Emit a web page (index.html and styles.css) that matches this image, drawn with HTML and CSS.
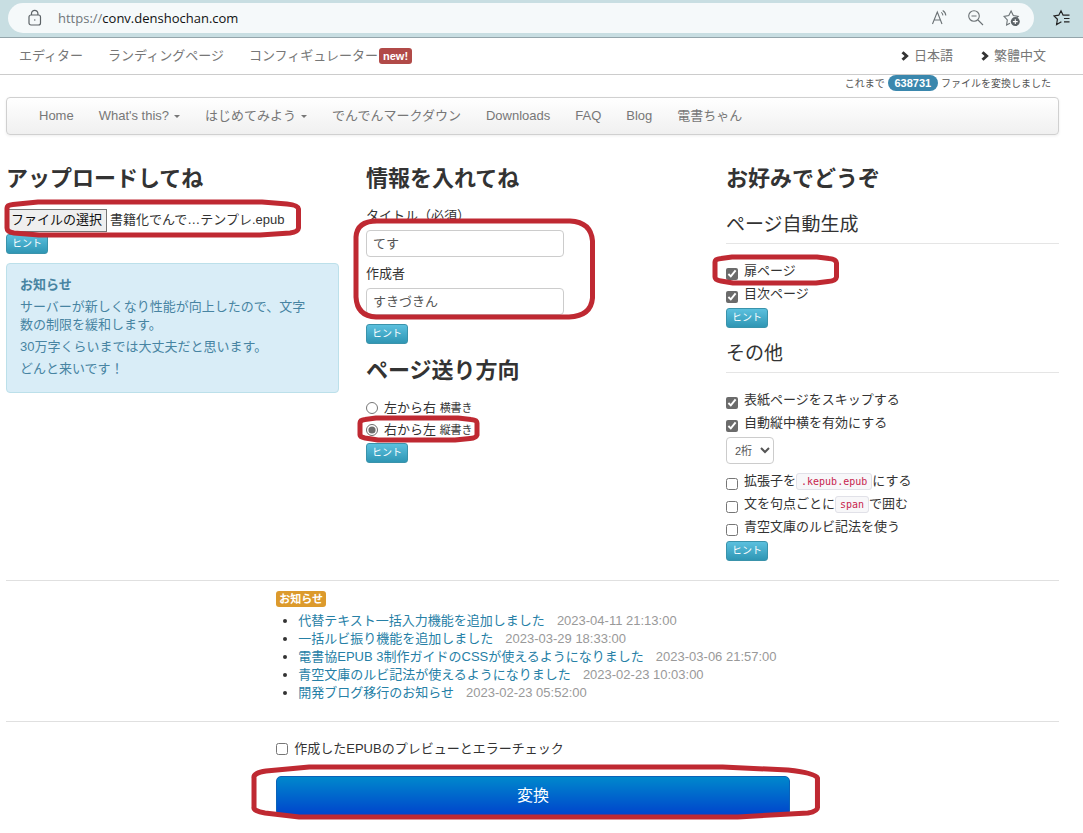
FILE: index.html
```html
<!DOCTYPE html>
<html lang="ja">
<head>
<meta charset="utf-8">
<title>でんでんコンバーター</title>
<link rel="stylesheet" href="styles.css">
</head>
<body>
<div class="browser">
  <div class="address">
    <svg class="lock" width="14" height="18" viewBox="0 0 14 18" fill="none" stroke="#5c6367" stroke-width="1.2"><rect x="1" y="6" width="11.5" height="10" rx="2"/><path d="M3.5 6V4.5a3.2 3.2 0 0 1 6.4 0V6"/><circle cx="6.8" cy="11" r=".7" fill="#5c6367" stroke="none"/></svg>
    <span class="url"><span class="scheme">https://</span>conv.denshochan.com</span>
    <button class="tool" type="button" aria-label="音声で読み上げる"><svg width="18" height="18" viewBox="0 0 18 18" fill="none" stroke="#6b7275" stroke-width="1.1"><path d="M1.5 15 6.3 3 11 15M3.2 11h6.2M10.2 3.4q1.600 1 1.700 3M11.700 1.500q2.900 1.700 3.100 5"/></svg></button>
    <button class="tool" type="button" aria-label="縮小"><svg width="18" height="18" viewBox="0 0 18 18" fill="none" stroke="#6b7275" stroke-width="1.1"><circle cx="7" cy="7" r="5.3"/><path d="M4.5 7h5M11 11l5 5"/></svg></button>
    <button class="tool" type="button" aria-label="お気に入りに追加"><svg width="18" height="18" viewBox="0 0 18 18" fill="none" stroke="#6b7275" stroke-width="1.1"><path d="M7 14.2 3.6 16l.7-5L1 7.4l4.8-.8L8.1 2l2.2 4.6 4.9.8-1.6 1.6"/><circle cx="12.3" cy="12.6" r="4.5" fill="#5c6367" stroke="none"/><path d="M12.3 10.2V15M9.9 12.6h4.8" stroke="#fff"/></svg></button>
  </div>
  <button class="tool favorites" type="button" aria-label="お気に入り"><svg width="18" height="18" viewBox="0 0 18 18" fill="none" stroke="#222" stroke-width="1.2"><path d="M8.4 12.8 3.6 15.5l.8-5.2L1 7l4.8-.8L8 1.8l2.1 4.4h6.4M11 9.5h5.5M11 12.8h5.5"/></svg></button>
</div>

<header class="topbar">
  <nav class="toplinks">
    <a href="#">エディター</a>
    <a href="#">ランディングページ</a>
    <a href="#">コンフィギュレーター<span class="new">new!</span></a>
  </nav>
  <nav class="languages">
    <a href="#"><svg width="9" height="10" viewBox="0 0 9 10"><path d="M.5 2.2 2.5.3 7.8 5 2.5 9.7.5 7.8 3.6 5z" fill="#333"/></svg>日本語</a>
    <a href="#"><svg width="9" height="10" viewBox="0 0 9 10"><path d="M.5 2.2 2.5.3 7.8 5 2.5 9.7.5 7.8 3.6 5z" fill="#333"/></svg>繁體中文</a>
  </nav>
</header>

<div class="page">
  <p class="counter">これまで <span class="count">638731</span> ファイルを変換しました</p>

  <nav class="navbar">
    <a href="#">Home</a>
    <a href="#" class="dropdown">What's this?</a>
    <a href="#" class="dropdown">はじめてみよう</a>
    <a href="#">でんでんマークダウン</a>
    <a href="#">Downloads</a>
    <a href="#">FAQ</a>
    <a href="#">Blog</a>
    <a href="#">電書ちゃん</a>
  </nav>

  <form>
    <div class="columns">
      <section>
        <h2>アップロードしてね</h2>
        <div class="file marked">
          <button class="choose" type="button">ファイルの選択</button>
          <span>書籍化でんで…テンプレ.epub</span>
          <svg class="mark mark-file" width="298" height="40" viewBox="0 0 298 40"><path d="M3 9Q3 6 9 5.500L34 3H258L283 5Q294 6 294.500 10V29Q294 33 286 34L256 36H35L10 34Q3 33 3 29Z"/></svg>
        </div>
        <button class="hint" type="button">ヒント</button>
        <div class="notice">
          <strong>お知らせ</strong>
          <p>サーバーが新しくなり性能が向上したので、文字数の制限を緩和します。</p>
          <p>30万字くらいまでは大丈夫だと思います。</p>
          <p>どんと来いです！</p>
        </div>
      </section>

      <section>
        <h2>情報を入れてね</h2>
        <div class="fields marked">
          <label for="title">タイトル（必須）</label>
          <input id="title" type="text" value="てす">
          <label for="author">作成者</label>
          <input id="author" type="text" value="すきづきん">
          <svg class="mark mark-fields" width="243" height="102" viewBox="0 0 243 102"><path d="M3 19Q4 3 24 3H217Q238 4 239.500 23V80Q238 98 216 99H23Q4 98 3 79Z"/></svg>
        </div>
        <button class="hint" type="button">ヒント</button>
        <h2 class="next">ページ送り方向</h2>
        <label class="radio"><input type="radio" name="direction"><span>左から右 <small>横書き</small></span></label>
        <label class="radio marked"><input type="radio" name="direction" checked><span>右から左 <small>縦書き</small></span>
          <svg class="mark mark-radio" width="123" height="28" viewBox="0 0 123 28"><path d="M3 8Q3 5 8 4.500L19 3H101L114 4.500Q120 5 120 8V20Q119 23 113 23.500L98 25H21L8 23Q3 22 3 20Z"/></svg>
        </label>
        <button class="hint" type="button">ヒント</button>
      </section>

      <section>
        <h2>お好みでどうぞ</h2>
        <h3>ページ自動生成</h3>
        <label class="check marked"><input type="checkbox" checked>扉ページ
          <svg class="mark mark-check" width="128" height="32" viewBox="0 0 128 32"><path d="M3 8Q3 5 9 4.500L20 3H105L117 4.500Q124 5 124.500 9V23Q124 27 116 27.500L104 29H21L9 27Q3 26 3 23Z"/></svg>
        </label>
        <label class="check"><input type="checkbox" checked>目次ページ</label>
        <button class="hint" type="button">ヒント</button>
        <h3 class="next">その他</h3>
        <label class="check"><input type="checkbox" checked>表紙ページをスキップする</label>
        <label class="check"><input type="checkbox" checked>自動縦中横を有効にする</label>
        <select aria-label="縦中横の桁数"><option>2桁</option><option>3桁</option></select>
        <label class="check"><input type="checkbox"><span>拡張子を<code>.kepub.epub</code>にする</span></label>
        <label class="check"><input type="checkbox"><span>文を句点ごとに<code>span</code>で囲む</span></label>
        <label class="check"><input type="checkbox">青空文庫のルビ記法を使う</label>
        <button class="hint" type="button">ヒント</button>
      </section>
    </div>

    <hr>
    <section class="center news">
      <span class="badge">お知らせ</span>
      <ul>
        <li><a href="#">代替テキスト一括入力機能を追加しました</a><time>2023-04-11 21:13:00</time></li>
        <li><a href="#">一括ルビ振り機能を追加しました</a><time>2023-03-29 18:33:00</time></li>
        <li><a href="#">電書協EPUB 3制作ガイドのCSSが使えるようになりました</a><time>2023-03-06 21:57:00</time></li>
        <li><a href="#">青空文庫のルビ記法が使えるようになりました</a><time>2023-02-23 10:03:00</time></li>
        <li><a href="#">開発ブログ移行のお知らせ</a><time>2023-02-23 05:52:00</time></li>
      </ul>
    </section>
    <hr>
    <div class="center submit">
      <label class="preview"><input type="checkbox">作成したEPUBのプレビューとエラーチェック</label>
      <div class="marked">
        <button class="convert" type="submit">変換</button>
        <svg class="mark mark-convert" viewBox="0 0 568 56" preserveAspectRatio="none"><path d="M3 14Q2 9 15 7L58 3H470L535 6Q562 9 564.500 14V43Q565 47 555 49L485 53H48L14 49Q2 47 3 43Z"/></svg>
      </div>
    </div>
  </form>
</div>
</body>
</html>
```
FILE: styles.css
```css
* { box-sizing: border-box; }

body {
  margin: 0;
  background: #fff;
  color: #333;
  font: 13px/18px "Liberation Sans", "Noto Sans CJK JP", sans-serif;
}

a { color: #777; text-decoration: none; }
button, input, select { margin: 0; font: inherit; }
p { margin: 0; }
svg { display: block; }

/* browser chrome */
.browser {
  display: flex;
  align-items: center;
  height: 38px;
  padding: 0 12px 2px 8px;
  background: #c8dee2;
  border-bottom: 1px solid #94a5ab;
}
.address {
  flex: 1;
  display: flex;
  align-items: center;
  gap: 18px;
  height: 30px;
  padding: 0 13px 0 20px;
  border-radius: 15px;
  background: #f5f9fa;
}
.url {
  flex: 1;
  color: #111;
  font: 13px/18px "Open Sans", "Noto Sans", sans-serif;
}
.lock { margin-right: -2px; }
.scheme { color: #70777a; }
.tool { padding: 0; border: 0; background: none; }
.favorites { margin-left: 19px; }

/* site links */
.topbar {
  display: flex;
  justify-content: space-between;
  align-items: center;
  height: 37px;
  padding: 0 37px 0 19px;
  border-bottom: 1px solid #ccc;
}
.toplinks { display: flex; gap: 25px; }
.new {
  display: inline-block;
  margin-left: 1px;
  padding: 0 4px;
  border-radius: 3px;
  background: #b14a48;
  color: #fff;
  font-size: 11px;
  font-weight: bold;
  line-height: 16px;
}
.languages { display: flex; gap: 28px; }
.languages a { display: flex; align-items: center; gap: 4px; }

.page { padding: 0 24px 14px 6px; }
.counter {
  height: 22px;
  padding-right: 8px;
  color: #555;
  font-size: 10px;
  line-height: 16px;
  text-align: right;
}
.count {
  display: inline-block;
  padding: 0 7px;
  border-radius: 8px;
  background: #3a87ad;
  color: #fff;
  font-size: 11px;
  font-weight: bold;
}

.navbar {
  display: flex;
  align-items: center;
  gap: 25px;
  height: 38px;
  padding: 0 32px;
  margin-bottom: 26px;
  border: 1px solid #d0d0d0;
  border-radius: 4px;
  background: linear-gradient(#fff, #f0f0f0);
  box-shadow: 0 1px 3px rgba(0, 0, 0, .07);
}
.dropdown::after {
  content: "";
  display: inline-block;
  margin-left: 5px;
  border: 3px solid transparent;
  border-top-color: #777;
  border-bottom: 0;
  vertical-align: middle;
}

/* three form columns */
.columns {
  display: grid;
  grid-template-columns: repeat(3, 1fr);
  gap: 27px;
}
h2 { margin: 0 0 10px; font-size: 22px; line-height: 36px; }
h3 {
  margin: 0 0 18px;
  border-bottom: 1px solid #e5e5e5;
  font-size: 19px;
  font-weight: normal;
  line-height: 36px;
}
h3.next { margin-top: 8px; }
h2.next { margin-top: 9px; }

.marked { position: relative; }
.mark {
  position: absolute;
  z-index: 1;
  fill: none;
  stroke: #bf2932;
  stroke-width: 5;
  stroke-linejoin: round;
  pointer-events: none;
}
.mark-file { left: -2px; top: -8px; }
.mark-fields { left: -13px; top: 11px; }
.mark-radio { left: -9px; top: -6px; }
.mark-check { left: -14px; top: -8px; }
.mark-convert { left: -5%; top: -12px; width: 111%; height: 56px; }

.file { display: flex; align-items: center; gap: 3px; height: 26px; margin-bottom: 1px; white-space: nowrap; }
.choose {
  height: 23px;
  padding: 0 4px;
  border: 1px solid #767676;
  background: #efefef;
  color: #111;
  line-height: 18px;
}
.hint {
  display: block;
  height: 20px;
  padding: 0 5px;
  border: 1px solid #3a93ab;
  border-radius: 3px;
  background: linear-gradient(#5bc0de, #2f96b4);
  color: #fff;
  font-size: 10px;
  line-height: 18px;
}

.notice {
  margin-top: 9px;
  padding: 12px 31px 10px 13px;
  border: 1px solid #bce0ea;
  border-radius: 4px;
  background: #d9edf7;
  color: #4784a2;
}
.notice strong { display: block; margin-bottom: 4px; }
.notice p { margin-bottom: 4px; }

.fields { padding-bottom: 9px; }
.fields label { display: block; margin-bottom: 5px; }
.fields input {
  display: block;
  width: 198px;
  height: 27px;
  padding: 0 6px 2px;
  border: 1px solid #ccc;
  border-radius: 4px;
  color: #555;
}
.fields input + label { margin-top: 8px; }

.radio, .check { display: flex; gap: 6px; width: fit-content; height: 18px; }
.radio { align-items: center; margin-bottom: 4px; }
.radio small { font-size: 11px; }
.check { margin-bottom: 5px; }
input[type="checkbox"], input[type="radio"] {
  flex: none;
  width: 12px;
  height: 12px;
  accent-color: #6b6b6b;
}
.check input { margin-top: 6px; }
code {
  padding: 2px 4px;
  border: 1px solid #e1e1e8;
  border-radius: 3px;
  background: #f7f7f9;
  color: #c7254e;
  font: 10px "DejaVu Sans Mono", monospace;
}
select {
  display: block;
  width: 48px;
  height: 27px;
  margin-bottom: 8px;
  padding: 0 0 0 4px;
  border: 1px solid #ccc;
  border-radius: 4px;
  background: #fff;
  color: #555;
  font-size: 11px;
}

/* news and submit */
hr { margin: 19px 0 0; border: 0; border-top: 1px solid #e0e0e0; }
.center { width: 49%; max-width: calc(50% - 13px); margin-left: calc(25% + 7px); }
.news { padding-top: 10px; }
.badge {
  display: block;
  width: fit-content;
  padding: 0 3px;
  border-radius: 3px;
  background: #dc9a2c;
  color: #fff;
  font-size: 11px;
  font-weight: bold;
  line-height: 16px;
}
.news ul { margin: 5px 0 0; padding-left: 22px; }
.news li { height: 18px; white-space: nowrap; }
.news a { color: #2680a6; }
.news time { margin-left: 12px; color: #999; }
.submit { padding-top: 18px; }
.preview { display: flex; align-items: center; gap: 6px; margin-bottom: 18px; }
.convert {
  display: block;
  width: 100%;
  height: 40px;
  border: 1px solid #0a62b8;
  border-radius: 5px;
  background: linear-gradient(#0088cc, #0044cc);
  color: #fff;
  font-size: 16px;
}
```
